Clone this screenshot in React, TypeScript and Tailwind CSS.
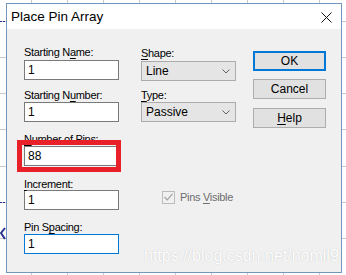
import React from 'react';

const font = 'font-["Liberation_Sans",Arial,sans-serif]';

const Mn = ({ children }: { children: React.ReactNode }) => (
  <span className="underline underline-offset-[2px] decoration-[1px]">{children}</span>
);

const Label = ({ children, className = '' }: { children: React.ReactNode; className?: string }) => (
  <div className={`h-[14px] leading-[19px] text-[11px] tracking-[-0.3px] text-black ${className}`}>{children}</div>
);

const TextBox = ({ value, className = '', focused = false }: { value: string; className?: string; focused?: boolean }) => (
  <div
    className={`h-[20px] w-[95px] bg-white border flex items-center pl-[3px] text-[12px] text-black ${
      focused ? 'border-[#0078d7]' : 'border-[#7a7a7a]'
    } ${className}`}
  >
    {value}
  </div>
);

const Select = ({ value, className = '' }: { value: string; className?: string }) => (
  <div
    className={`h-[20px] w-[95px] bg-[#e5e5e5] border border-[#acacac] flex items-center justify-between pl-[4px] pr-[5px] text-[12px] text-black ${className}`}
  >
    <span>{value}</span>
    <svg width="8" height="5" viewBox="0 0 8 5">
      <polyline points="0.5,0.5 4,4 7.5,0.5" fill="none" stroke="#606060" strokeWidth="1" />
    </svg>
  </div>
);

const Button = ({ children, primary = false, className = '' }: { children: React.ReactNode; primary?: boolean; className?: string }) => (
  <div
    className={`h-[20px] w-[73px] bg-[#e1e1e1] flex items-center justify-center text-[12px] text-black ${
      primary ? 'border-2 border-[#0078d7]' : 'border border-[#adadad]'
    } ${className}`}
  >
    {children}
  </div>
);

const Backdrop = () => (
  <svg className="absolute inset-0" width="346" height="275">
    {[31, 67, 103, 139, 175, 211, 247, 283, 319].map((x) => (
      <line key={'v' + x} x1={x + 0.5} y1="0" x2={x + 0.5} y2="275" stroke="#c9c9c9" />
    ))}
    {[21, 57, 93, 129, 166, 202, 238].map((y) => (
      <line key={'h' + y} x1="0" y1={y + 0.5} x2="346" y2={y + 0.5} stroke="#c9c9c9" />
    ))}
    <line x1="0" y1="21.5" x2="6" y2="21.5" stroke="#23318a" strokeDasharray="2 1" />
    <line x1="0" y1="202.5" x2="6" y2="202.5" stroke="#23318a" strokeDasharray="2 1" />
    <polyline points="5,228 1,233 5,239" fill="none" stroke="#23318a" strokeWidth="2" />
  </svg>
);

export default function App() {
  return (
    <div className={`relative w-[346px] h-[275px] bg-white overflow-hidden ${font}`}>
      <Backdrop />

      <div className="absolute left-[6px] top-[3px] w-[336px] h-[270px] border border-[#7596be] bg-[#f0f0f0] flex flex-col">
        {/* title bar */}
        <div className="h-[25px] bg-white flex items-center justify-between pl-[4px] pr-[8px]">
          <span className="text-[13.5px] text-black pt-[1px]">Place Pin Array</span>
          <svg width="11" height="11" viewBox="0 0 11 11" className="mr-[1px] mt-[1px]">
            <path d="M0.5 0.5 L10.5 10.5 M10.5 0.5 L0.5 10.5" stroke="#111" strokeWidth="1" />
          </svg>
        </div>

        {/* body */}
        <div className="flex-1 flex pl-[17px]">
          <div className="w-[95px] pt-[14px]">
            <Label>
              Starting N<Mn>a</Mn>me:
            </Label>
            <TextBox value="1" className="mt-[3px]" />
            <Label className="mt-[6px]">
              Starting N<Mn>u</Mn>mber:
            </Label>
            <TextBox value="1" className="mt-[2px]" />
            <Label className="mt-[8px]">
              <Mn>N</Mn>umber of Pins:
            </Label>
            <TextBox value="88" className="mt-[2px]" />
            <Label className="mt-[9px]">
              <Mn>I</Mn>ncrement:
            </Label>
            <TextBox value="1" className="mt-[1px]" />
            <Label className="mt-[8px]">
              Pin S<Mn>p</Mn>acing:
            </Label>
            <TextBox value="1" focused className="mt-[2px]" />
          </div>

          <div className="w-[95px] ml-[22px] pt-[15px]">
            <Label>
              <Mn>S</Mn>hape:
            </Label>
            <Select value="Line" className="mt-[3px]" />
            <Label className="mt-[5px]">
              <Mn>T</Mn>ype:
            </Label>
            <Select value="Passive" className="mt-[2px]" />
            <div className="mt-[67px] ml-[21px] flex items-center gap-[5px]">
              <div className="w-[13px] h-[13px] border border-[#bcbcbc] bg-[#f0f0f0] flex items-center justify-center">
                <svg width="9" height="8" viewBox="0 0 9 8">
                  <polyline points="0.5,4 3.2,6.8 8.5,0.8" fill="none" stroke="#a3a3a3" strokeWidth="1.2" />
                </svg>
              </div>
              <span className="text-[11px] tracking-[-0.3px] text-[#6d6d6d]">
                Pins <Mn>V</Mn>isible
              </span>
            </div>
          </div>

          <div className="ml-[17px] pt-[22px] flex flex-col">
            <Button primary>OK</Button>
            <Button className="mt-[8px]">Cancel</Button>
            <Button className="mt-[9px]">
              <Mn>H</Mn>elp
            </Button>
          </div>
        </div>
      </div>

      {/* annotation + watermark painted over the screenshot */}
      <div className="absolute left-[17px] top-[140px] w-[104px] h-[32px] border-[5px] border-[#e8202a]" />
      <div className="absolute left-[144px] top-[247px] text-[16px] leading-[18px] text-white [text-shadow:0_0_1px_#b8b8b8]">
        https://blog.csdn.net/nomil9
      </div>
    </div>
  );
}
